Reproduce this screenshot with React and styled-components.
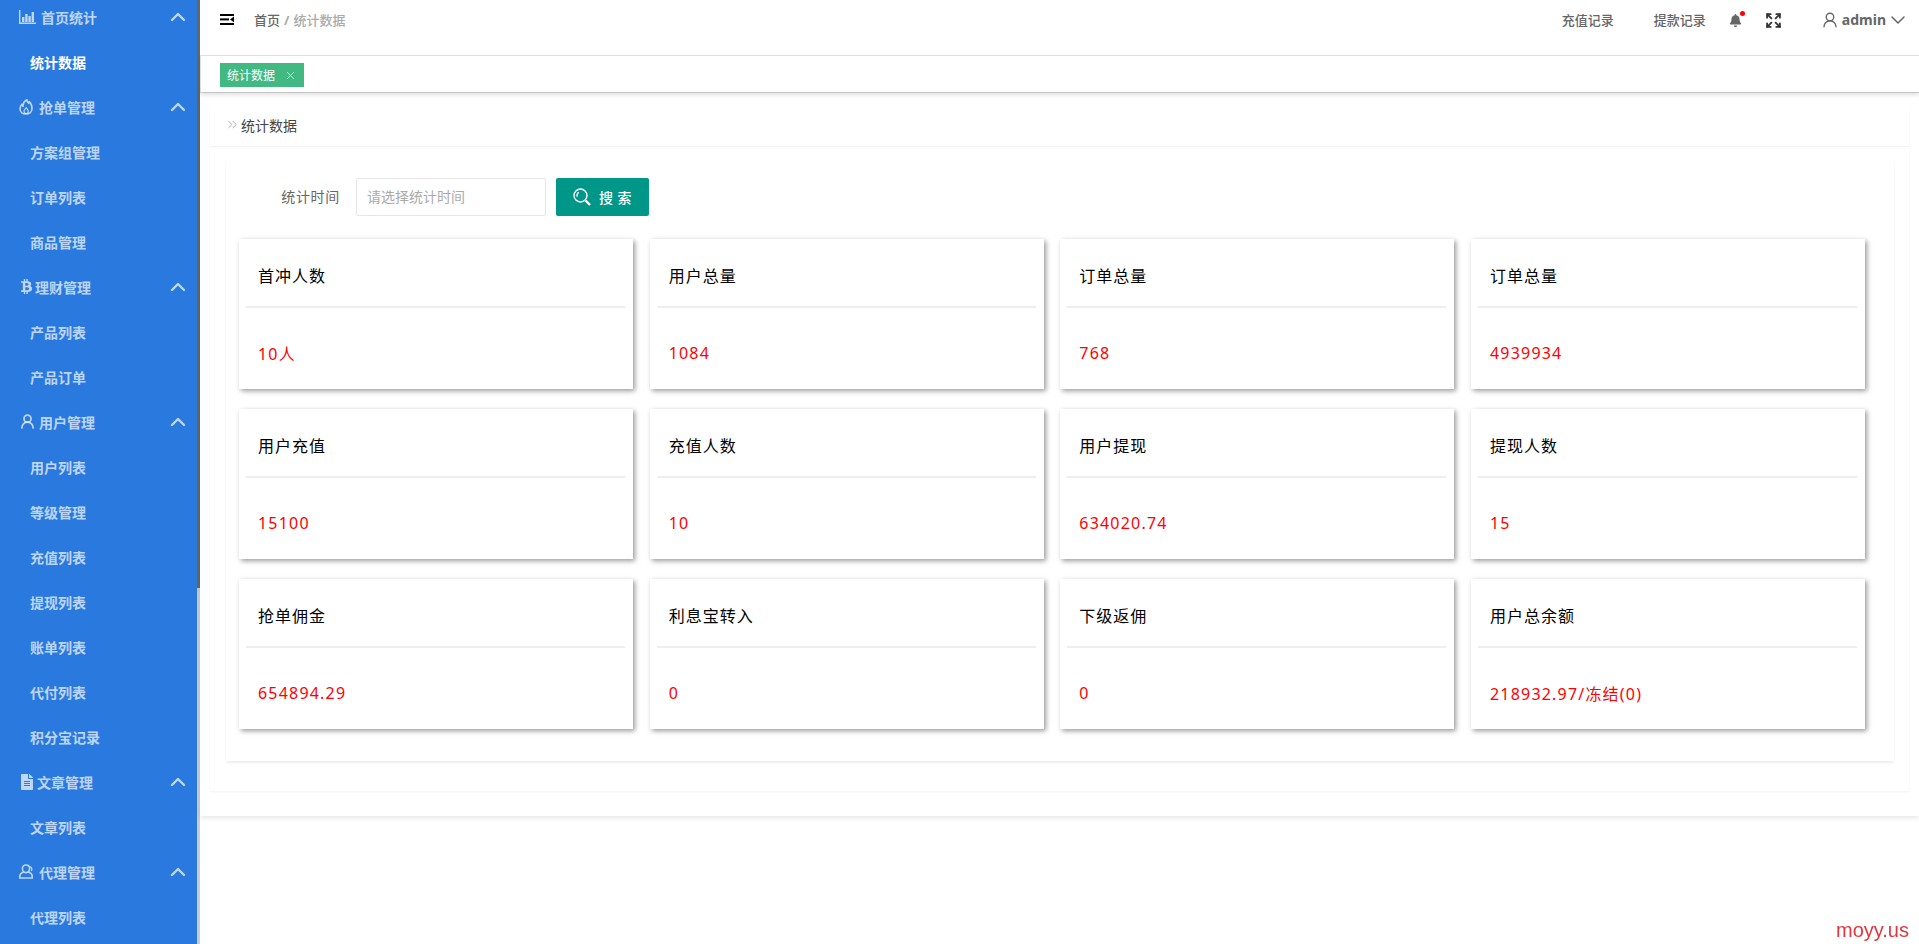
import React from 'react';
import styled, { createGlobalStyle } from 'styled-components';
import { ChevronUp, ChevronDown, UserRound, X, ChevronsRight, Expand } from 'lucide-react';
import { FaBtc, FaFileAlt, FaBell } from 'react-icons/fa';

const GlobalStyle = createGlobalStyle`
  html, body {
    margin: 0;
    padding: 0;
    height: 100%;
    overflow: hidden;
    background: #fff;
    font-family: "Noto Sans", "Noto Sans CJK SC", sans-serif;
  }
  * { box-sizing: border-box; }
`;

const Layout = styled.div`
  display: flex;
  height: 944px;
  overflow: hidden;
`;

const Sidebar = styled.nav`
  width: 197px;
  flex-shrink: 0;
  background: #2a79de;
  overflow: hidden;
`;

const SideList = styled.div`
  margin-top: -6px;
`;

const SideHead = styled.div`
  height: 45px;
  padding: 0 7px 0 19px;
  display: flex;
  align-items: center;
  color: rgba(255, 255, 255, 0.7);
  font-size: 14px;
  font-weight: 700;
`;

const IconBox = styled.span`
  width: ${p => p.$w}px;
  flex-shrink: 0;
  display: flex;
  align-items: center;
`;

const HeadText = styled.span`
  flex: 1;
`;

const HeadArrow = styled(ChevronUp)`
  margin-top: 1px;
`;

const SideItem = styled.div`
  height: 45px;
  padding-left: 30px;
  display: flex;
  align-items: center;
  font-size: 14px;
  font-weight: 700;
  color: ${p => (p.$active ? '#fff' : 'rgba(255, 255, 255, 0.7)')};
`;

const ScrollTrack = styled.div`
  width: 3px;
  flex-shrink: 0;
  background: #ccc;
`;

const ScrollThumb = styled.div`
  height: 588px;
  background: #666;
`;

const Main = styled.main`
  flex: 1;
  min-width: 0;
`;

const Header = styled.header`
  height: 56px;
  padding: 0 9px 0 20px;
  display: flex;
  align-items: flex-start;
  border-bottom: 1px solid #e2e2e2;
`;

const HeaderLeft = styled.div`
  height: 38px;
  display: flex;
  align-items: center;
  flex: 1;
`;

const Crumbs = styled.div`
  margin-left: 20px;
  font-size: 13px;
  font-weight: 500;
  color: #666;
`;

const CrumbSep = styled.span`
  margin: 0 4px;
  color: #aaa;
  font-weight: 700;
`;

const CrumbNow = styled.span`
  color: #aaa;
`;

const HeaderRight = styled.div`
  height: 38px;
  display: flex;
  align-items: center;
  color: #666;
`;

const HeadLink = styled.span`
  font-size: 13px;
  font-weight: 500;
  margin-right: ${p => p.$mr}px;
`;

const BellWrap = styled.span`
  position: relative;
  display: flex;
  margin: 3px 23px 0 0;
`;

const RedDot = styled.span`
  position: absolute;
  top: -3px;
  right: -3px;
  width: 5px;
  height: 5px;
  border-radius: 50%;
  background: #f00;
`;

const ExpandIcon = styled(Expand)`
  margin-top: 3px;
  color: #333;
`;

const AdminIcon = styled(UserRound)`
  margin: 1px 3px 0 39px;
`;

const AdminName = styled.span`
  font-size: 14px;
  font-weight: 700;
`;

const AdminArrow = styled(ChevronDown)`
  margin-top: 1px;
`;

const TabBar = styled.div`
  height: 37px;
  padding: 7px 0 0 19px;
  border-left: 1px solid #ddd;
  border-bottom: 1px solid #c8c8c8;
  box-shadow: 0 2px 4px rgba(0, 0, 0, 0.12);
`;

const Tag = styled.span`
  width: 84px;
  height: 24px;
  padding-left: 7px;
  display: flex;
  align-items: center;
  gap: 9px;
  background: #42b983;
  color: #fff;
  font-size: 12px;
`;

const ContentWrap = styled.div`
  height: 723px;
  padding: 12px 10px 0;
  box-shadow: 0 2px 5px rgba(0, 0, 0, 0.1);
`;

const Panel = styled.section`
  height: 686px;
  box-shadow: 0 1px 2px rgba(0, 0, 0, 0.05);
`;

const PanelHead = styled.div`
  height: 42px;
  padding: 0 0 2px 15px;
  display: flex;
  align-items: center;
  gap: 1px;
  border-bottom: 1px solid #f2f2f2;
  font-size: 14px;
  color: #444;
`;

const PanelBody = styled.div`
  padding: 13px 15px 0 16px;
`;

const InnerCard = styled.div`
  height: 601px;
  padding: 18px 0 0 13px;
  box-shadow: 0 2px 2px rgba(0, 0, 0, 0.07);
`;

const SearchRow = styled.div`
  display: flex;
  align-items: center;
  height: 38px;
  margin-bottom: 23px;
`;

const FieldLabel = styled.label`
  width: 117px;
  padding: 0 16px 2px 0;
  text-align: right;
  font-size: 14px;
  letter-spacing: 0.7px;
  color: #666;
`;

const FakeInput = styled.input`
  width: 190px;
  height: 38px;
  padding: 0 10px 2px;
  border: 1px solid #e6e6e6;
  border-radius: 2px;
  font-family: inherit;
  font-size: 14px;
  outline: none;
  &::placeholder { color: #aaa; }
`;

const SearchButton = styled.button`
  width: 93px;
  height: 38px;
  margin-left: 10px;
  padding-bottom: 1px;
  border: 0;
  border-radius: 2px;
  display: flex;
  align-items: center;
  justify-content: center;
  gap: 8px;
  background: #009688;
  color: #fff;
  font-family: inherit;
  font-size: 14px;
  font-weight: 500;
  letter-spacing: 0.5px;
`;

const CardGrid = styled.div`
  display: grid;
  grid-template-columns: repeat(4, 394px);
  column-gap: 16.67px;
  row-gap: 20px;
`;

const Card = styled.div`
  height: 150px;
  padding: 0 8px 0 7px;
  background: #fff;
  box-shadow: 2px 2px 5px rgba(0, 0, 0, 0.4);
`;

const CardTitle = styled.div`
  height: 69px;
  padding: 4px 0 0 12px;
  display: flex;
  align-items: center;
  border-bottom: 2px solid #eee;
  font-size: 16px;
  letter-spacing: 1px;
  color: #000;
`;

const CardValue = styled.div`
  height: 81px;
  padding: 8px 0 0 12px;
  display: flex;
  align-items: center;
  font-size: 16px;
  letter-spacing: 1.2px;
  color: #f00;
`;

const Watermark = styled.div`
  position: fixed;
  right: 10px;
  bottom: 2px;
  font-family: "Liberation Sans", Arial, sans-serif;
  font-size: 20px;
  color: #e0383e;
`;

const MenuIcon = () => (
  <svg width="14" height="11" viewBox="0 0 14 11">
    <path d="M0 1h14M0 10h14" stroke="#000" strokeWidth="2" />
    <path d="M0 5.4h9" stroke="#000" strokeWidth="2" />
    <path d="M14 2.6v5.6L10 5.4z" fill="#000" />
  </svg>
);

const SearchIcon = () => (
  <svg width="18" height="18" viewBox="0 0 18 18" fill="none" stroke="#fff">
    <circle cx="7.5" cy="7.5" r="6.5" strokeWidth="1.4" />
    <path d="M4.2 8.8a4 4 0 0 1 1.6-4.6" strokeWidth="1.2" />
    <path d="M12.5 12.5l4.5 4.5" strokeWidth="2.4" />
  </svg>
);

const ChartIcon = () => (
  <svg width="17" height="14" viewBox="0 0 17 14" fill="currentColor">
    <path d="M0 0h1.4v12.6H17V14H0z" />
    <path d="M3 7h2.4v5H3zM6.2 4h2.4v8H6.2zM9.4 6h2.4v6H9.4zM12.6 2H15v10h-2.4z" />
  </svg>
);

const FlameIcon = () => (
  <svg width="14" height="16" viewBox="0 0 14 16" fill="none" stroke="currentColor" strokeWidth="1.6" strokeLinejoin="round">
    <path d="M8 .8c-.2 2.200 1 3 1.700 3.400.3-.5.500-1 .5-1.600C12 4.300 13 6.600 13 9.500 13 13 10.300 15 7 15s-6-2-6-5.300c0-1.900.8-3.300 2-4.500.1 1 .4 1.700 1 2.100C4 4.800 5.500 2 8 .8z" />
    <path d="M7.200 8.500c-.2 1.200-2.200 2-2.200 3.800C5 13.600 6 14.500 7.200 14.500s2.100-.9 2.100-2.200c0-1.600-1.700-2.400-2.100-3.800z" strokeWidth="1.100" />
  </svg>
);

const AgentIcon = () => (
  <svg width="15" height="15" viewBox="0 0 15 15" fill="none" stroke="currentColor" strokeWidth="1.6">
    <path d="M7 1c2.300 0 3.600 1.600 3.600 3.600 0 2.200-1.300 4-3.600 4S3.400 6.800 3.400 4.600C3.400 2.600 4.700 1 7 1z" />
    <path d="M4.500 8.300C2.300 9 .8 10.300.8 12.300V14h12.400v-1.700c0-2-1.500-3.300-3.700-4" />
    <path d="M10.800 2.500c1.800.5 2.700 2.500 1.600 4.500" strokeWidth="1.200" />
  </svg>
);

const menu = [
  { title: '首页统计', w: 22, icon: <ChartIcon />, items: ['统计数据'] },
  { title: '抢单管理', w: 20, icon: <FlameIcon />, items: ['方案组管理', '订单列表', '商品管理'] },
  { title: '理财管理', w: 16, icon: <FaBtc size={15} />, items: ['产品列表', '产品订单'] },
  { title: '用户管理', w: 20, icon: <UserRound size={17} strokeWidth={2.4} />, items: ['用户列表', '等级管理', '充值列表', '提现列表', '账单列表', '代付列表', '积分宝记录'] },
  { title: '文章管理', w: 18, icon: <FaFileAlt size={16} />, items: ['文章列表'] },
  { title: '代理管理', w: 20, icon: <AgentIcon />, items: ['代理列表'] },
];

const stats = [
  ['首冲人数', '10人'], ['用户总量', '1084'], ['订单总量', '768'], ['订单总量', '4939934'],
  ['用户充值', '15100'], ['充值人数', '10'], ['用户提现', '634020.74'], ['提现人数', '15'],
  ['抢单佣金', '654894.29'], ['利息宝转入', '0'], ['下级返佣', '0'], ['用户总余额', '218932.97/冻结(0)'],
];

export default function App() {
  return (
    <Layout>
      <GlobalStyle />
      <Sidebar>
        <SideList>
          {menu.map(group => (
            <div key={group.title}>
              <SideHead>
                <IconBox $w={group.w}>{group.icon}</IconBox>
                <HeadText>{group.title}</HeadText>
                <HeadArrow size={24} strokeWidth={2.4} />
              </SideHead>
              {group.items.map(item => (
                <SideItem key={item} $active={item === '统计数据'}>{item}</SideItem>
              ))}
            </div>
          ))}
        </SideList>
      </Sidebar>
      <ScrollTrack><ScrollThumb /></ScrollTrack>
      <Main>
        <Header>
          <HeaderLeft>
            <MenuIcon />
            <Crumbs>首页<CrumbSep>/</CrumbSep><CrumbNow>统计数据</CrumbNow></Crumbs>
          </HeaderLeft>
          <HeaderRight>
            <HeadLink $mr={40}>充值记录</HeadLink>
            <HeadLink $mr={23}>提款记录</HeadLink>
            <BellWrap><FaBell size={13} /><RedDot /></BellWrap>
            <ExpandIcon size={17} strokeWidth={2.6} />
            <AdminIcon size={18} strokeWidth={1.8} />
            <AdminName>admin</AdminName>
            <AdminArrow size={24} strokeWidth={1.5} />
          </HeaderRight>
        </Header>
        <TabBar>
          <Tag>统计数据 <X size={13} strokeWidth={1.4} /></Tag>
        </TabBar>
        <ContentWrap>
          <Panel>
            <PanelHead>
              <ChevronsRight size={15} strokeWidth={1.6} color="#aaa" />
              统计数据
            </PanelHead>
            <PanelBody>
              <InnerCard>
                <SearchRow>
                  <FieldLabel>统计时间</FieldLabel>
                  <FakeInput placeholder="请选择统计时间" />
                  <SearchButton><SearchIcon /> 搜 索</SearchButton>
                </SearchRow>
                <CardGrid>
                  {stats.map(([title, value], i) => (
                    <Card key={i}>
                      <CardTitle>{title}</CardTitle>
                      <CardValue>{value}</CardValue>
                    </Card>
                  ))}
                </CardGrid>
              </InnerCard>
            </PanelBody>
          </Panel>
        </ContentWrap>
      </Main>
      <Watermark>moyy.us</Watermark>
    </Layout>
  );
}
